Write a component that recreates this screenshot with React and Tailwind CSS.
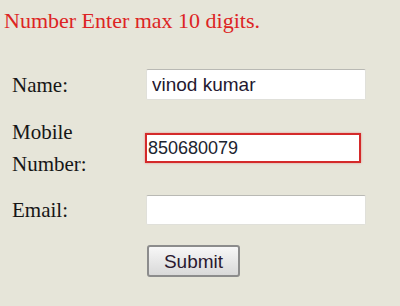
export default function App() {
  return (
    <div className="w-[400px] h-[306px] overflow-hidden bg-[#e6e5d9] font-['Liberation_Serif',serif] text-[#161616]">
      <p className="pl-[4px] pt-[8px] text-[22px] leading-[26px] text-[#dd2424]">Number Enter max 10 digits.</p>

      <div className="mt-[35px] pl-[12px]">
        <div className="flex h-[31px] items-center">
          <label className="w-[134px] text-[21px] leading-[26px]">Name:</label>
          <input
            readOnly
            value="vinod kumar"
            className="h-[31px] w-[220px] rounded-[2px] border border-[#e0e0da] border-t-[#b9b9b4] bg-white pl-[5px] font-['Liberation_Sans',sans-serif] text-[19px] text-[#241830] outline-none"
          />
        </div>

        <div className="mt-[16px] flex items-center">
          <label className="w-[133px] text-[21px] leading-[32px]">
            Mobile
            <br />
            Number:
          </label>
          <input
            readOnly
            value="850680079"
            className="h-[30px] w-[216px] border-2 border-[#d42a2a] bg-white pl-[1px] font-['Liberation_Sans',sans-serif] text-[18px] text-[#1c2430] shadow-[0_0_2px_rgba(230,60,60,0.5)] outline-none"
          />
        </div>

        <div className="mt-[15px] flex h-[30px] items-center">
          <label className="w-[134px] text-[21px] leading-[26px]">Email:</label>
          <input
            readOnly
            value=""
            className="h-[30px] w-[220px] rounded-[2px] border border-[#e0e0da] border-t-[#b9b9b4] bg-white pl-[5px] font-['Liberation_Sans',sans-serif] text-[18px] outline-none"
          />
        </div>

        <div className="mt-[20px] flex">
          <div className="w-[135px]" />
          <button className="h-[32px] w-[93px] rounded-[3px] border-2 border-[#8c8c8c] bg-gradient-to-b from-[#f7f7f7] to-[#d9d9d9] font-['Liberation_Sans',sans-serif] text-[19px] leading-none text-[#2a1830]">
            Submit
          </button>
        </div>
      </div>
    </div>
  );
}
